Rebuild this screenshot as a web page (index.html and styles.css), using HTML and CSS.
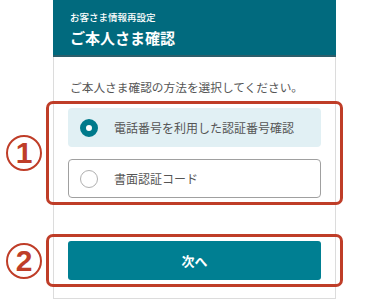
FILE: index.html
```html
<!DOCTYPE html>
<html lang="ja">
<head>
<meta charset="utf-8">
<link rel="stylesheet" href="styles.css">
</head>
<body>
<div class="page">
  <div class="card">
    <header class="card-head">
      <p class="eyebrow">お客さま情報再設定</p>
      <h1 class="title">ご本人さま確認</h1>
    </header>
    <div class="card-body">
      <p class="lead">ご本人さま確認の方法を選択してください。</p>
      <div class="options annot">
        <span class="mark"><span class="mark-num">1</span></span>
        <div class="option selected"><span class="radio"></span><span class="option-label">電話番号を利用した認証番号確認</span></div>
        <div class="option"><span class="radio"></span><span class="option-label">書面認証コード</span></div>
      </div>
      <div class="actions annot">
        <span class="mark"><span class="mark-num">2</span></span>
        <button class="next" type="button">次へ</button>
      </div>
    </div>
  </div>
</div>
</body>
</html>
```
FILE: styles.css
```css
html, body {
  margin: 0;
  padding: 0;
  background: #ffffff;
}
body {
  font-family: "Noto Sans CJK JP", "Noto Sans", sans-serif;
}
.page {
  padding-left: 53px;
}
.card {
  width: 283px;
  box-sizing: border-box;
  border: 1px solid #dcdcdc;
  border-top: none;
  height: 299px;
}
.card-head {
  margin: 0 -1px;
  background: #016a7e;
  border-bottom: 2px solid #2d5e6b;
  height: 57px;
  padding: 11px 0 0 17px;
  box-sizing: border-box;
  color: #fff;
}
.eyebrow {
  margin: 0;
  font-size: 9.5px;
  line-height: 12px;
  font-weight: 500;
}
.title {
  margin: 4px 0 0;
  font-size: 15px;
  line-height: 22px;
  font-weight: 700;
}
.card-body {
  padding: 0 14px;
}
.lead {
  margin: 21px 0 0 2px;
  font-size: 11.7px;
  line-height: 18px;
  color: #555;
  white-space: nowrap;
}
.annot {
  position: relative;
}
.annot::after {
  content: "";
  position: absolute;
  top: -7px;
  bottom: -7px;
  left: -22px;
  right: -22px;
  border: 3px solid #bf3d28;
  border-radius: 7px;
  pointer-events: none;
}
.mark {
  position: absolute;
  left: -62px;
  top: 50%;
  width: 36px;
  height: 36px;
  margin-top: -18px;
  box-sizing: border-box;
  border: 2px solid #bf3d28;
  border-radius: 50%;
  display: flex;
  align-items: center;
  justify-content: center;
  color: #bf3d28;
}
.mark-num {
  font-family: "Liberation Sans", sans-serif;
  font-size: 30px;
  line-height: 1;
  font-weight: 700;
}
.options {
  margin-top: 12px;
  display: flex;
  flex-direction: column;
  gap: 12px;
}
.option {
  height: 39px;
  box-sizing: border-box;
  border-radius: 4px;
  display: flex;
  align-items: center;
  padding-left: 12px;
  gap: 16px;
  font-size: 12px;
  color: #555;
}
.option.selected {
  background: #e1f0f4;
}
.option:not(.selected) {
  border: 1px solid #a0a0a0;
  padding-left: 11px;
}
.radio {
  width: 18px;
  height: 18px;
  box-sizing: border-box;
  border-radius: 50%;
  border: 1px solid #b0b0b0;
  background: #fff;
  flex: none;
}
.selected .radio {
  border: 6px solid #007a8b;
  background: #fff;
}
.actions {
  margin-top: 43px;
}
.next {
  display: block;
  width: 100%;
  height: 39px;
  border: none;
  border-radius: 3px;
  background: #007f92;
  color: #fff;
  font-family: "Noto Sans CJK JP", sans-serif;
  font-size: 13px;
  font-weight: 700;
  padding: 0;
}
```
